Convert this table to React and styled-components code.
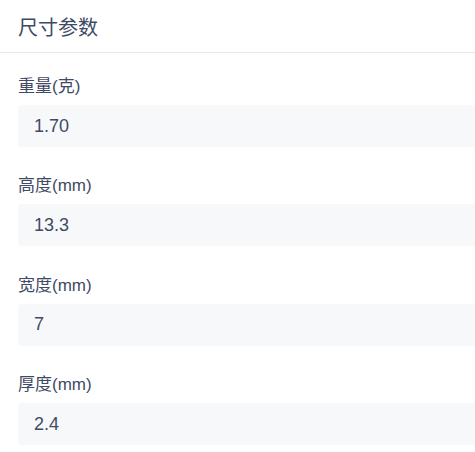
import React from "react";
import styled, { createGlobalStyle } from "styled-components";

const GlobalStyle = createGlobalStyle`
  body {
    margin: 0;
    background: #ffffff;
    overflow: hidden;
    font-family: "Liberation Sans", "Noto Sans CJK SC", sans-serif;
  }
`;

const Panel = styled.div`
  width: 100%;
  background: #ffffff;
`;

const Header = styled.div`
  height: 52px;
  display: flex;
  align-items: center;
  padding-left: 18px;
  border-bottom: 1px solid #e6e7ea;
  font-size: 20px;
  color: #404a64;
`;

const Body = styled.div`
  padding: 22px 0 0 18px;
`;

const Field = styled.div`
  margin-bottom: 27.4px;
`;

const Label = styled.div`
  height: 24px;
  line-height: 24px;
  font-size: 17px;
  color: #404a64;
  margin-bottom: 6px;
`;

const ValueBox = styled.div`
  height: 42px;
  display: flex;
  align-items: center;
  padding-left: 16px;
  border-radius: 4px 0 0 4px;
  background: #f7f8fa;
  font-size: 18px;
  color: #404a64;
`;

const fields = [
  { label: "重量(克)", value: "1.70" },
  { label: "高度(mm)", value: "13.3" },
  { label: "宽度(mm)", value: "7" },
  { label: "厚度(mm)", value: "2.4" },
];

export default function App() {
  return (
    <Panel>
      <GlobalStyle />
      <Header>尺寸参数</Header>
      <Body>
        {fields.map((f) => (
          <Field key={f.label}>
            <Label>{f.label}</Label>
            <ValueBox>{f.value}</ValueBox>
          </Field>
        ))}
      </Body>
    </Panel>
  );
}
